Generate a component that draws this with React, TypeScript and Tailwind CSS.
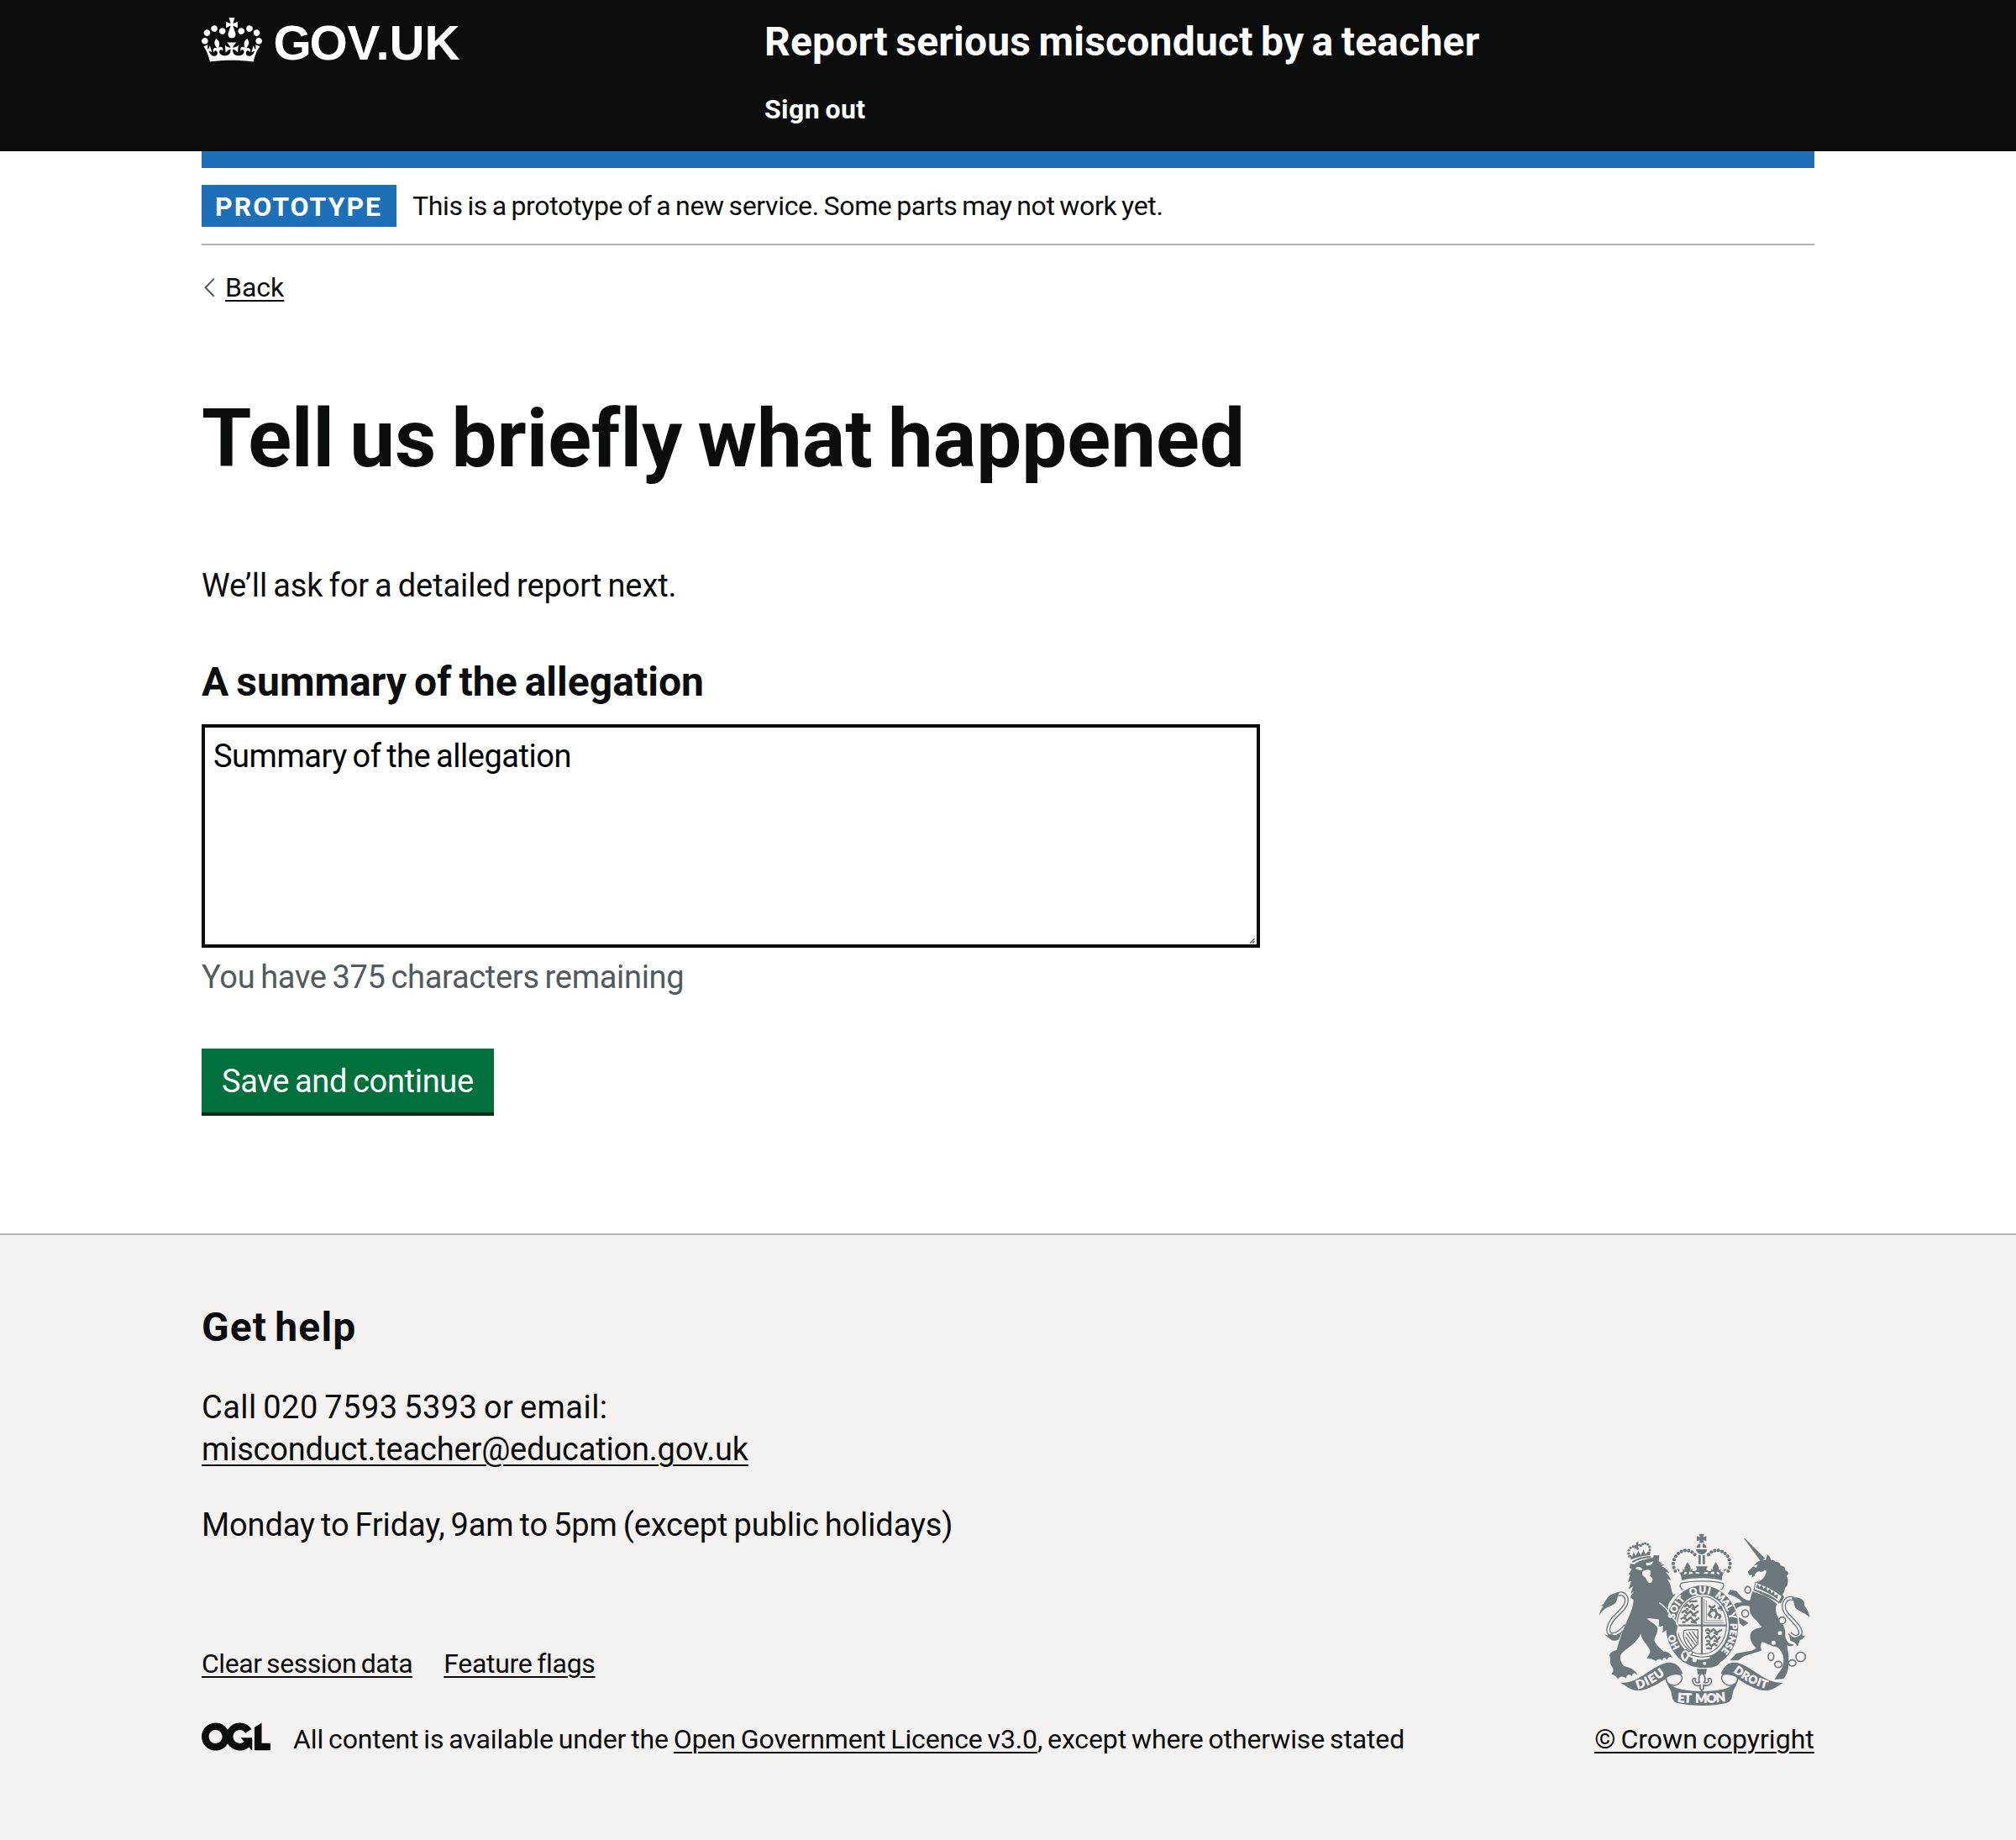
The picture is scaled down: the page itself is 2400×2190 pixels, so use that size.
import React from "react";

const LINK = "underline decoration-2 underline-offset-[4px]";
const GREY = "#6c777b";
const PAPER = "#f3f2f1";

function Crown() {
  return (
    <svg viewBox="0 0 132 97" className="mt-[21px] h-[53px] w-[72px] shrink-0" fill="#ffffff" aria-hidden="true">
      <path
        fillRule="evenodd"
        d="M25 30.2c3.5 1.5 7.7-.2 9.1-3.7 1.5-3.6-.2-7.8-3.9-9.2-3.6-1.4-7.6.3-9.1 3.9-1.4 3.5.3 7.5 3.9 9zM9 39.5c3.6 1.5 7.8-.2 9.2-3.7 1.5-3.6-.2-7.8-3.9-9.1-3.6-1.5-7.6.2-9.1 3.8-1.4 3.5.3 7.5 3.8 9zM4.4 57.2c3.5 1.5 7.7-.2 9.1-3.8 1.5-3.6-.2-7.7-3.9-9.1-3.5-1.5-7.6.3-9.1 3.8-1.4 3.5.3 7.6 3.9 9.1zm38.3-21.4c3.5 1.5 7.7-.2 9.1-3.8 1.5-3.6-.2-7.7-3.9-9.1-3.6-1.5-7.6.3-9.1 3.8-1.3 3.6.4 7.7 3.9 9.1zm64.4-5.6c-3.6 1.5-7.8-.2-9.1-3.7-1.5-3.6.2-7.8 3.8-9.2 3.6-1.4 7.7.3 9.2 3.9 1.3 3.5-.4 7.5-3.9 9zm15.9 9.3c-3.6 1.5-7.7-.2-9.1-3.7-1.5-3.6.2-7.8 3.7-9.1 3.6-1.5 7.7.2 9.2 3.8 1.5 3.5-.3 7.5-3.8 9zm4.7 17.7c-3.6 1.5-7.8-.2-9.2-3.8-1.5-3.6.2-7.7 3.9-9.1 3.6-1.5 7.7.3 9.2 3.8 1.3 3.5-.4 7.6-3.9 9.1zM89.3 35.8c-3.6 1.5-7.8-.2-9.2-3.8-1.4-3.6.2-7.7 3.9-9.1 3.6-1.5 7.7.3 9.2 3.8 1.4 3.6-.3 7.7-3.9 9.1zM69.7 17.7l8.9 4.7V9.3l-8.9 2.8c-.2-.3-.5-.6-.9-.9L72.4 0H59.6l3.5 11.2c-.3.3-.6.5-.9.9l-8.8-2.8v13.1l8.8-4.7c.3.3.6.7.9.9l-5 15.4v.1c-.2.8-.4 1.6-.4 2.4 0 4.1 3.1 7.5 7 8.1h.2c.3 0 .7.1 1 .1.4 0 .7 0 1-.1h.2c4-.6 7.1-4.1 7.1-8.1 0-.8-.1-1.7-.4-2.4V34l-5.1-15.4c.4-.2.7-.6 1-.9zM66 92.8c16.9 0 32.8 1.1 47.1 3.2 4-16.9 8.9-26.7 14-33.5l-9.6-3.4c1 4.9 1.1 7.2 0 10.2-1.5-1.4-3-4.3-4.2-8.7L108.6 76c2.8-2 5-3.2 7.5-3.3-4.4 9.4-10 11.9-13.6 11.2-4.3-.8-6.3-4.6-5.6-7.9 1-4.7 5.7-5.9 8-.5 4.3-8.7-3-11.4-7.6-8.8 7.1-7.2 7.9-13.5 2.1-21.1-8 6.1-8.1 12.3-4.5 20.8-4.7-5.4-12.1-2.5-9.5 6.2 3.4-5.2 7.9-2 7.2 3.1-.6 4.3-6.4 7.8-13.5 7.2-10.3-.9-10.9-8-11.2-13.8 2.5-.5 7.1 1.8 11 7.3L80.2 60c-4.1 4.4-8 5.3-12.3 5.4 1.4-4.4 8-11.6 8-11.6H55.5s6.4 7.2 7.9 11.6c-4.2-.1-8-1-12.3-5.4l1.4 16.4c3.9-5.5 8.5-7.7 10.9-7.3-.3 5.8-.9 12.8-11.1 13.8-7.2.6-12.9-2.9-13.5-7.2-.7-5 3.8-8.3 7.1-3.1 2.7-8.7-4.6-11.6-9.4-6.2 3.7-8.5 3.6-14.7-4.6-20.8-5.8 7.6-5 13.9 2.2 21.1-4.7-2.6-11.9.1-7.7 8.8 2.3-5.5 7.1-4.2 8.1.5.7 3.3-1.3 7.1-5.7 7.9-3.5.7-9-1.8-13.5-11.2 2.5.1 4.7 1.3 7.5 3.3l-4.7-15.4c-1.2 4.4-2.7 7.2-4.3 8.7-1.1-3-.9-5.3 0-10.2l-9.5 3.4c5 6.9 9.9 16.7 14 33.5 14.8-2.1 30.8-3.2 47.7-3.2z"
      />
    </svg>
  );
}

function Wordmark() {
  return (
    <svg viewBox="0 0 250 100" className="h-[100px] w-[250px] shrink-0 overflow-visible" role="img" aria-label="GOV.UK">
      <text
        x="3.6 46.6 91.4 125.6 141.4 183.6"
        y="71"
        fill="#ffffff"
        className="font-['Liberation_Sans'] text-[58.2px] font-bold"
      >
        GOV.UK
      </text>
    </svg>
  );
}

function OglLogo() {
  return (
    <svg viewBox="0 0 483.2 195.7" className="h-[34px] w-[82px] shrink-0" fill="#0b0c0c" aria-hidden="true">
      <path d="M421.5 142.8V.1l-50.7 32.3v161.1h112.4v-50.7zm-122.3-9.6A47.12 47.12 0 0 1 221 97.8c0-26 21.1-47.1 47.1-47.1 16.7 0 31.4 8.7 39.7 21.8l42.7-27.2A97.63 97.63 0 0 0 268.1 0c-36.5 0-68.3 20.1-85.1 49.7A98 98 0 0 0 97.8 0C43.9 0 0 43.9 0 97.8s43.9 97.8 97.8 97.8c36.5 0 68.3-20.1 85.1-49.7a97.76 97.76 0 0 0 149.6 25.4l19.4 22.2h3v-87.8h-80l24.3 27.5zM97.8 145c-26 0-47.1-21.1-47.1-47.1s21.1-47.1 47.1-47.1 47.1 21.1 47.1 47.1S123.8 145 97.8 145" />
    </svg>
  );
}

const crownBeads: [number, number][] = [
  [313, 181], [308, 168], [306, 154], [309, 140], [315, 128], [324, 118], [335, 111], [348, 107], [361, 108], [373, 113], [383, 122],
];
const lionBeads: [number, number][] = [
  [149, 128], [146, 118], [147, 107], [153, 98], [162, 93], [171, 96], [190, 90], [197, 84], [206, 82], [215, 86], [221, 94], [222, 105], [220, 115],
];
const chainRings: [number, number, number, number][] = [
  [572, 248, 10, 12], [563, 332, 12, 13], [695, 357, 12, 12], [687, 402, 10, 10], [664, 437, 10, 10],
  [655, 486, 10, 14], [681, 514, 13, 11], [731, 509, 13, 11], [761, 487, 17, 17],
];

function HalfCrown() {
  return (
    <g>
      {crownBeads.map(([x, y]) => (
        <circle key={`${x}-${y}`} cx={x} cy={y} r="6.2" />
      ))}
      <path d="M334 200C331 188 325 180 317 172L329 176L326 186C332 186 337 184 341 180L338 172L346 178C344 166 352 158 357 149C361 158 372 166 367 178L375 172L373 181C380 182 386 180 391 174L386 164L408 164V206C380 206 356 208 336 214Z" />
      <path d="M345 186C350 181 356 184 354 190L344 194ZM362 184C368 180 374 183 376 190L362 192ZM384 186C390 182 398 184 402 190H386Z" fill={PAPER} />
    </g>
  );
}

function RoyalArms() {
  return (
    <svg viewBox="42 46 750 615" className="h-[205px] w-[250px]" fill={GREY} aria-hidden="true">
      <defs>
        <path id="garterLeft" d="M330 453A101 118 0 0 1 309 398" />
        <path id="garterTop" d="M310 353A101 118 0 0 1 354 279" />
        <path id="garterQui" d="M368 270A101 118 0 0 1 442 266" />
        <path id="garterMal" d="M453 272A101 118 0 0 1 509 360" />
        <path id="garterRight" d="M510 368A101 118 0 0 1 474 469" />
        <path id="dieu" d="M178 602Q238 585 284 543" />
        <path id="droit" d="M520 540Q570 582 644 602" />
        <path id="etmon" d="M320 648Q408 656 496 645" />
      </defs>

      {/* Lion: tail, crown, body */}
      <path d="M98 269C130 248 148 276 134 304C120 330 78 350 74 388C72 416 104 416 136 376" fill="none" stroke={GREY} strokeWidth="15" />
      <path d="M98 269C130 248 148 276 134 304C120 330 78 350 74 388C72 416 104 416 136 376" fill="none" stroke={PAPER} strokeWidth="7" />
      <path d="M42 340C44 318 52 314 56 306L46 304C58 302 60 292 68 280C78 264 98 258 116 256C104 268 108 286 98 296C84 310 56 308 42 340Z" />
      <path d="M58 402C66 412 74 412 84 404C90 412 112 416 124 396L112 424C104 430 94 430 86 428C84 422 66 418 58 402Z" />
      {lionBeads.map(([x, y]) => (
        <circle key={`${x}-${y}`} cx={x} cy={y} r="4.6" />
      ))}
      <path d="M173 78L182 76L180 85L188 84V92L180 91L184 104L176 106L174 93L167 95L166 87L174 88Z" />
      <path d="M155 140L151 122L160 130L164 112L172 127L181 108L190 124L200 104L206 120L218 110L222 124C198 124 176 132 155 140Z" />
      <path d="M158 146C178 134 200 128 226 127L224 134C200 134 180 140 162 151Z" />
      <path d="M152 154L166 156C186 142 206 138 234 132L236 124L256 125L254 146L266 152L258 156L275 158L264 164C276 168 286 176 292 188L278 184C288 194 296 204 297 214L284 208C292 220 298 232 298 242L304 264L314 263C306 274 296 284 290 298L286 312C300 328 306 342 310 356L320 376L316 402C306 394 300 402 296 412C290 404 284 400 284 388C278 396 272 396 268 400C272 388 266 382 272 376C264 376 258 380 254 378C258 368 254 360 256 354C244 352 230 350 212 350C222 362 240 368 249 382C254 398 240 414 238 428C244 446 262 460 272 468C288 468 298 476 302 490C292 484 288 488 284 498C278 488 270 488 266 500C258 492 250 496 244 502C236 496 224 492 212 492C218 480 226 472 222 462C212 440 192 428 190 404C178 436 146 452 122 474C112 488 118 508 130 520C150 526 172 532 178 552C166 542 160 544 158 556C148 546 138 552 138 564C126 554 114 556 108 568C104 556 94 550 84 550C94 540 94 532 86 520C76 508 84 494 78 482C80 470 92 466 104 462C116 420 126 392 142 356C152 332 164 306 164 284L152 274L166 252L154 262L162 236L146 246L156 216L144 220L152 194L146 192L158 174L150 170Z" />
      <path d="M170 170C180 162 190 166 196 174C190 180 178 178 170 170ZM208 152C216 152 226 150 234 146C234 156 220 164 210 160ZM198 180C208 176 220 174 226 180C222 188 228 194 222 198C236 204 236 220 222 224C210 220 212 206 204 202C198 196 190 194 198 180Z" fill={PAPER} />

      {/* Unicorn: horn, tail, body, collar, chain */}
      <path d="M558 64L562 64L634 136L618 146Z" />
      <path d="M736 280C708 270 692 300 706 326C720 350 762 376 760 402C756 424 732 418 722 402" fill="none" stroke={GREY} strokeWidth="15" />
      <path d="M736 280C708 270 692 300 706 326C720 350 762 376 760 402C756 424 732 418 722 402" fill="none" stroke={PAPER} strokeWidth="7" />
      <path d="M728 276C746 272 764 276 772 288C778 296 772 302 776 306C784 318 792 326 792 346C780 332 760 326 746 316C734 306 742 290 728 276Z" />
      <path d="M720 406C732 420 750 422 764 404C766 412 770 414 776 410C774 422 764 426 758 428L750 450C742 438 736 432 724 430Z" />
      <path d="M572 184C576 174 592 168 598 156C606 144 622 140 636 142L642 122C650 126 654 134 654 142C664 140 668 142 672 148C684 148 688 154 690 162C702 162 706 168 706 178C716 182 718 186 716 194L710 198C718 206 716 220 712 236C704 232 706 256 696 264L702 274L690 296L594 250L602 222C612 214 622 204 630 192L614 182C606 182 598 188 596 198L586 204L588 194L578 196Z" />
      <path d="M596 160L608 158L602 168L594 166ZM610 186L628 182C632 174 640 176 638 184C636 200 624 212 608 220C616 208 624 198 622 190Z" fill={PAPER} />
      <path d="M600 222C632 232 664 248 692 270L684 292C656 268 624 254 594 246Z" fill={PAPER} />
      <path d="M594 248C628 256 660 270 684 294M600 220L594 250M696 268L682 296" fill="none" stroke={GREY} strokeWidth="3.5" />
      <path d="M602 240L606 226L614 238L622 230L628 244L638 236L642 252L652 244L656 260L666 252L668 268L680 264L678 280C654 262 628 250 602 240Z" />
      <path d="M588 254C620 262 652 276 676 298C668 316 672 336 686 354C698 370 706 384 706 402C704 420 712 432 722 440L738 444C730 450 718 450 712 446L718 482C718 506 720 526 712 544C706 556 704 562 698 566L668 568L680 546C690 538 700 520 700 500C700 480 692 466 680 454C664 450 640 440 624 434C618 440 616 452 622 464C596 474 572 480 556 486L538 500H508L530 476C546 472 566 468 584 466L602 456C584 438 576 420 584 400C592 388 606 384 622 382C614 370 606 360 600 354C590 346 584 338 580 328L578 306C562 302 546 304 534 312C526 322 524 336 528 342C544 346 560 354 574 366L556 378C546 366 528 364 518 356L522 300C530 292 544 294 552 292C538 274 520 270 500 262L510 248L532 252C546 270 558 284 580 286Z" />
      {chainRings.map(([x, y, rx, ry]) => (
        <ellipse key={`${x}-${y}`} cx={x} cy={y} rx={rx} ry={ry} fill={PAPER} stroke={GREY} strokeWidth="5" />
      ))}

      {/* Royal crown */}
      <path d="M398 48H416L412 60L424 56V74L412 70L416 80H398L402 70L390 74V56L402 60Z" />
      <path d="M389 98C390 88 398 83 403 83V98ZM425 98C424 88 416 83 411 83V98ZM387 103H427C425 114 418 121 407 121S389 114 387 103Z" />
      <path d="M396 124H404V156H396ZM411 124H419V156H411Z" />
      <HalfCrown />
      <g transform="matrix(-1 0 0 1 815 0)">
        <HalfCrown />
      </g>
      <path d="M334 224C372 214 442 214 482 224C492 232 482 248 470 250H346C334 248 326 234 334 224Z" fill={PAPER} stroke={GREY} strokeWidth="4" />

      {/* Garter and shield */}
      <ellipse cx="409" cy="379" rx="134" ry="152" fill={PAPER} />
      <ellipse cx="409" cy="379" rx="129" ry="147" />
      <ellipse cx="409" cy="376" rx="95" ry="112" fill={PAPER} />
      <ellipse cx="408" cy="374" rx="88" ry="103" fill="none" stroke={GREY} strokeWidth="3.5" />
      <path d="M320 375H498M408 274V476" fill="none" stroke={GREY} strokeWidth="7" />
      <path d="M416 280V366H488M424 286V358H484" fill="none" stroke={GREY} strokeWidth="2.5" />
      <g fill="none" stroke={GREY} strokeWidth="7" strokeLinejoin="round">
        <path d="M346 310L356 300L364 310L374 300L382 312L396 302M352 314L360 320M372 312L384 320M336 330L348 322L356 334L368 324L378 336L396 324M344 338L354 342M372 336L388 342M332 352L346 346L354 358L368 346L380 360L398 348M338 364L350 362M368 362L390 366M362 290L392 288" />
        <path d="M420 394L430 388L438 398L450 388L462 400L480 390M424 400L436 406M450 400L466 408M420 420L432 412L440 424L452 412L464 426L474 414M424 430L438 432M450 428L466 434M422 446L434 438L442 450L452 440L462 448M424 456L444 458" />
        <path d="M432 304L444 312L440 324L456 318L462 334L476 340M444 312L456 304M440 324L432 336L444 346M462 334L454 350M476 340L468 352M466 316L476 308L480 322" strokeWidth="8" />
        <path d="M344 394C360 386 380 392 394 390V440L372 462C350 446 338 420 344 394ZM352 402L388 450M362 398L390 438M374 396L392 422M350 416L376 456" strokeWidth="4" />
      </g>
      <path d="M256 298C274 310 286 326 296 344L310 358L320 378L316 404C306 396 300 404 296 412C290 404 284 400 284 388C278 396 272 396 268 400C272 388 266 382 272 376C264 376 258 380 254 378L256 350Z" />
      <path d="M256 294C276 308 290 322 300 344L314 358L324 378L320 408" fill="none" stroke={PAPER} strokeWidth="4" />
      <path d="M332 480C336 462 352 456 362 468C374 458 378 476 368 480C390 488 420 490 436 484L440 492C414 504 380 500 360 500C350 512 330 500 332 480Z" fill={PAPER} stroke={GREY} strokeWidth="3.5" />
      <path d="M340 476L352 468L356 484L346 496Z" />
      <path d="M362 486C396 504 450 504 492 478L466 516C440 532 384 530 352 506Z" />
      <circle cx="382" cy="498" r="8" fill={PAPER} />
      <circle cx="418" cy="510" r="6" fill={PAPER} />
      <g fill={PAPER} stroke={PAPER} strokeWidth="1.4" className="font-['Lato'] text-[34px] font-black">
        <text><textPath href="#garterLeft" textLength="52">HO</textPath></text>
        <text><textPath href="#garterTop" textLength="82">SOIT</textPath></text>
        <text><textPath href="#garterQui" textLength="70">QUI</textPath></text>
        <text className="[word-spacing:4px]"><textPath href="#garterMal" textLength="102">MAL Y</textPath></text>
        <text className="text-[33px]"><textPath href="#garterRight" textLength="106">PENSE</textPath></text>
      </g>

      {/* Fleur-de-lis below the garter */}
      <path d="M390 530H426L422 550H394Z" />
      <path d="M408 544C396 556 394 566 400 578C392 582 380 578 386 566C376 558 372 572 378 582C384 592 396 590 402 588V600L408 608L414 600V588C422 590 434 592 440 582C446 572 440 558 430 566C436 578 426 582 416 578C424 566 420 556 408 544Z" fill={PAPER} stroke={GREY} strokeWidth="5" />

      {/* Motto ribbon */}
      <path d="M118 580C190 580 220 524 282 508C306 504 326 512 340 546C330 552 314 560 290 560C262 576 232 598 194 606C160 612 146 596 118 580Z" />
      <path d="M698 580C626 580 596 524 534 508C510 504 490 512 476 546C486 552 502 560 526 560C554 576 584 598 622 606C656 612 670 596 698 580Z" />
      <path d="M282 560C300 546 320 548 332 550C346 566 330 586 308 590C296 586 276 584 282 560ZM534 560C516 546 496 548 484 550C470 566 486 586 508 590C520 586 540 584 534 560Z" fill={PAPER} stroke={GREY} strokeWidth="4.5" />
      <path d="M282 568C290 586 310 598 340 604C380 612 436 612 476 604C506 598 526 586 534 568C536 590 520 600 518 620C516 640 508 648 496 652C440 664 376 664 320 652C308 648 302 640 300 620C298 600 280 590 282 568Z" />
      <g fill={PAPER} stroke={PAPER} strokeWidth="1.8" className="font-['Lato'] text-[42px] font-black">
        <text><textPath href="#dieu" textLength="112">DIEU</textPath></text>
        <text className="text-[40px]"><textPath href="#droit" textLength="134">DROIT</textPath></text>
        <text className="text-[45px] [word-spacing:10px]"><textPath href="#etmon" textLength="174">ET MON</textPath></text>
      </g>
    </svg>
  );
}

export default function App() {
  return (
    <div className="min-h-[2190px] w-full bg-white font-['Roboto',sans-serif] text-[38px] leading-[50px] text-[#0b0c0c]">
      <header className="h-[180px] bg-[#0b0c0c] px-60 text-white">
        <div className="flex">
          <a className="flex w-[670px] gap-[10px]">
            <Crown />
            <Wordmark />
          </a>
          <div className="flex flex-col gap-[30px] pt-5 font-bold">
            <span className="text-[48px] leading-[60px] tracking-[0.21px] [word-spacing:-0.06em]">Report serious misconduct by a teacher</span>
            <span className="text-[32px] leading-10 tracking-[0.4px] [word-spacing:-0.06em]">Sign out</span>
          </div>
        </div>
      </header>

      <main className="px-60 pb-[140px]">
        <div className="h-5 bg-[#1d70b8]" />
        <div className="flex gap-5 border-b-2 border-[#b1b4b6] py-5">
          <strong className="h-[50px] w-[232px] bg-[#1d70b8] pt-px pl-4 text-[32px] leading-[50px] font-bold tracking-[2px] text-white">
            PROTOTYPE
          </strong>
          <span className="-ml-px text-[32px] tracking-[-0.33px] [word-spacing:-0.06em]">
            This is a prototype of a new service. Some parts may not work yet.
          </span>
        </div>

        <a className="mt-[30px] flex h-10 items-center text-[32px] leading-10">
          <svg viewBox="0 0 28 40" className="h-10 w-7" fill="none" stroke="#505a5f" strokeWidth="2">
            <path d="M14.8 9.6L4.6 20.2L14.8 30.8" />
          </svg>
          <span className={LINK}>Back</span>
        </a>

        <h1 className="mt-[110px] text-[96px] leading-[100px] font-bold tracking-[0.05px] [word-spacing:-0.06em]">Tell us briefly what happened</h1>
        <p className="mt-[100px] tracking-[-0.08px] [word-spacing:-0.06em]">We’ll ask for a detailed report next.</p>

        <label htmlFor="summary" className="mt-[60px] block text-[48px] leading-[60px] font-bold tracking-[0.02px] [word-spacing:-0.06em]">
          A summary of the allegation
        </label>
        <div className="relative mt-5 h-[266px] w-[1260px]">
          <textarea
            id="summary"
            className="block h-full w-full resize-none overflow-hidden border-4 border-[#0b0c0c] bg-white px-[10px] pt-[9px] tracking-[-0.46px] text-black [word-spacing:-0.06em]"
            defaultValue="Summary of the allegation"
          />
          <svg viewBox="0 0 6 6" className="absolute right-[6px] bottom-[5px] h-[6px] w-[6px]" stroke="#555555">
            <path d="M0 5.5L5.5 0M3 5.5L5.5 3" strokeWidth="1.2" />
          </svg>
        </div>
        <p className="mt-[10px] tracking-[-0.3px] text-[#505a5f] [word-spacing:-0.06em]">You have 375 characters remaining</p>

        <button className="mt-[60px] flex h-20 w-[348px] items-start border-b-4 border-[#002d18] bg-[#00703c] pt-5 pl-6 leading-[38px] tracking-[-0.3px] whitespace-nowrap text-white [word-spacing:-0.06em]">
          Save and continue
        </button>
      </main>

      <footer className="border-t-2 border-[#b1b4b6] bg-[#f3f2f1] px-60 pt-20 pb-[100px]">
        <div className="flex items-end justify-between">
          <div>
            <h2 className="text-[48px] leading-[60px] font-bold tracking-[1.1px] [word-spacing:-0.08em]">Get help</h2>
            <p className="mt-10 tracking-[0.45px] [word-spacing:-0.06em]">Call 020 7593 5393 or email:</p>
            <a className="block w-fit tracking-[-0.19px] underline decoration-2 underline-offset-[5px]">
              misconduct.teacher@education.gov.uk
            </a>
            <p className="mt-10 tracking-[-0.12px] [word-spacing:-0.06em]">Monday to Friday, 9am to 5pm (except public holidays)</p>

            <div className="mt-[120px] flex gap-[37px] text-[32px] leading-10 [word-spacing:-1.9px]">
              <a className={`${LINK} tracking-[-0.46px]`}>Clear session data</a>
              <a className={`${LINK} tracking-[-0.29px]`}>Feature flags</a>
            </div>
            <div className="mt-[50px] flex gap-[27px] text-[32px] leading-10 [word-spacing:-1.9px]">
              <OglLogo />
              <p className="whitespace-nowrap tracking-[-0.12px]">
                All content is available under the <a className={LINK}>Open Government Licence v3.0</a>, except where otherwise stated
              </p>
            </div>
          </div>
          <div className="flex w-[262px] flex-col items-center gap-5 text-[32px] leading-10">
            <RoyalArms />
            <a className={`${LINK} whitespace-nowrap tracking-[0.03px] [word-spacing:-1.9px]`}>© Crown copyright</a>
          </div>
        </div>
      </footer>
    </div>
  );
}
